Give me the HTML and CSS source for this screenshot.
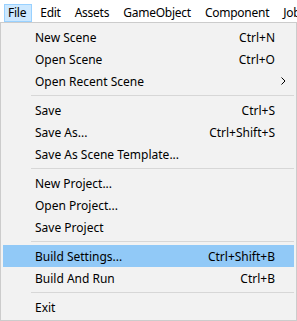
FILE: index.html
```html
<!DOCTYPE html>
<html lang="en">
<head>
  <meta charset="UTF-8" />
  <title>File menu</title>
  <link rel="stylesheet" href="styles.css">
</head>
<body>
  <!-- Menu bar -->
  <nav class="menubar">
    <span class="menubar-item active">File</span>
    <span class="menubar-item">Edit</span>
    <span class="menubar-item">Assets</span>
    <span class="menubar-item">GameObject</span>
    <span class="menubar-item">Component</span>
    <span class="menubar-item">Jobs</span>
  </nav>

  <!-- File dropdown -->
  <div class="menu">
    <div class="item"><span>New Scene</span><span class="key">Ctrl+N</span></div>
    <div class="item"><span>Open Scene</span><span class="key">Ctrl+O</span></div>
    <div class="item">
      <span>Open Recent Scene</span>
      <svg class="arrow" width="5" height="8" viewBox="0 0 5 8"><path d="M0.5 0.5 L4 4 L0.5 7.5" fill="none" stroke="#000" stroke-width="1"/></svg>
    </div>
    <div class="sep"></div>
    <div class="item"><span>Save</span><span class="key">Ctrl+S</span></div>
    <div class="item"><span>Save As...</span><span class="key">Ctrl+Shift+S</span></div>
    <div class="item"><span>Save As Scene Template...</span></div>
    <div class="sep"></div>
    <div class="item"><span>New Project...</span></div>
    <div class="item"><span>Open Project...</span></div>
    <div class="item"><span>Save Project</span></div>
    <div class="sep"></div>
    <div class="item hover"><span>Build Settings...</span><span class="key">Ctrl+Shift+B</span></div>
    <div class="item"><span>Build And Run</span><span class="key">Ctrl+B</span></div>
    <div class="sep"></div>
    <div class="item"><span>Exit</span></div>
  </div>
</body>
</html>
```

FILE: styles.css
```css
* {
  box-sizing: border-box;
}

body {
  margin: 0;
  font-family: "Noto Sans", "Open Sans", sans-serif;
  font-size: 12px;
  color: #000;
  background: #fff;
  overflow: hidden;
}

.menubar {
  display: flex;
  height: 22px;
  padding: 4px 0 0 4px;
  white-space: nowrap;
  overflow: hidden;
  letter-spacing: -0.25px;
  background: #fff;
}

.menubar-item {
  flex-shrink: 0;
  height: 18px;
  line-height: 16px;
  padding: 0 5px 0 3px;
  margin-right: 4px;
  border: 1px solid transparent;
}

.menubar-item.active {
  background: #cce8ff;
  border-color: #99d1ff;
}

.menu {
  width: 297px;
  height: 299px;
  padding: 3px 2px 2px 2px;
  background: #f2f2f2;
  border: 1px solid #cccccc;
}

.item {
  display: flex;
  align-items: center;
  justify-content: space-between;
  height: 22px;
  padding: 0 19px 0 32px;
}

.item.hover {
  background: #91c9f7;
}

.item .arrow {
  margin-right: -11px;
}

.sep {
  height: 1px;
  margin: 3px 0 3px 28px;
  background: #d7d7d7;
}
```
